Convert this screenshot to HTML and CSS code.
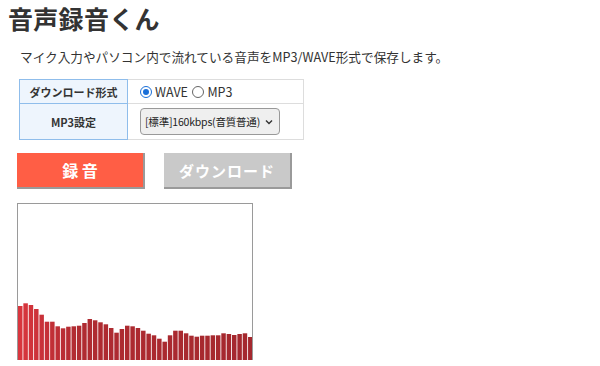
FILE: index.html
```html
<!DOCTYPE html>
<html lang="ja">
<head>
<meta charset="utf-8">
<link rel="stylesheet" href="styles.css">
</head>
<body>
<div class="page">
  <h1 class="title">音声録音くん</h1>
  <p class="desc">マイク入力やパソコン内で流れている音声をMP3/WAVE形式で保存します。</p>
  <table class="settings">
    <tr class="row1">
      <th>ダウンロード形式</th>
      <td>
        <label class="radio"><span class="dot checked"></span>WAVE</label>
        <label class="radio"><span class="dot"></span>MP3</label>
      </td>
    </tr>
    <tr class="row2">
      <th>MP3設定</th>
      <td>
        <div class="select">[標準]160kbps(音質普通)
          <svg class="chev" width="8" height="6" viewBox="0 0 8 6"><path d="M1 1.5 L4 4.5 L7 1.5" fill="none" stroke="#333" stroke-width="1.4"/></svg>
        </div>
      </td>
    </tr>
  </table>
  <div class="buttons">
    <div class="btn rec">録 音</div>
    <div class="btn dl">ダウンロード</div>
  </div>
  <div class="canvas">
    <svg width="234" height="155" viewBox="0 0 234 155">
      <defs>
        <linearGradient id="g" gradientUnits="userSpaceOnUse" x1="0" y1="0" x2="234" y2="0">
          <stop offset="0" stop-color="#da363e"/>
          <stop offset="0.25" stop-color="#b02b31"/>
          <stop offset="1" stop-color="#a4282e"/>
        </linearGradient>
      </defs>
      <g fill="url(#g)">
        <rect x="0" y="101" width="4.5" height="54"/>
        <rect x="5.35" y="98.3" width="4.5" height="56.7"/>
        <rect x="10.7" y="100" width="4.5" height="55"/>
        <rect x="16.05" y="104" width="4.5" height="51"/>
        <rect x="21.4" y="109.7" width="4.5" height="45.3"/>
        <rect x="26.75" y="116.7" width="4.5" height="38.3"/>
        <rect x="32.1" y="116.7" width="4.5" height="38.3"/>
        <rect x="37.45" y="121.3" width="4.5" height="33.7"/>
        <rect x="42.8" y="123.3" width="4.5" height="31.7"/>
        <rect x="48.15" y="121.7" width="4.5" height="33.3"/>
        <rect x="53.5" y="121.3" width="4.5" height="33.7"/>
        <rect x="58.85" y="120.7" width="4.5" height="34.3"/>
        <rect x="64.2" y="118" width="4.5" height="37"/>
        <rect x="69.55" y="114" width="4.5" height="41"/>
        <rect x="74.9" y="115.3" width="4.5" height="39.7"/>
        <rect x="80.25" y="117.3" width="4.5" height="37.7"/>
        <rect x="85.6" y="119.3" width="4.5" height="35.7"/>
        <rect x="90.95" y="123" width="4.5" height="32"/>
        <rect x="96.3" y="127.7" width="4.5" height="27.3"/>
        <rect x="101.65" y="124" width="4.5" height="31"/>
        <rect x="107" y="120.7" width="4.5" height="34.3"/>
        <rect x="112.35" y="121.3" width="4.5" height="33.7"/>
        <rect x="117.7" y="123" width="4.5" height="32"/>
        <rect x="123.05" y="125.7" width="4.5" height="29.3"/>
        <rect x="128.4" y="128.7" width="4.5" height="26.3"/>
        <rect x="133.75" y="130.3" width="4.5" height="24.7"/>
        <rect x="139.1" y="133.7" width="4.5" height="21.3"/>
        <rect x="144.45" y="136.7" width="4.5" height="18.3"/>
        <rect x="149.8" y="130.3" width="4.5" height="24.7"/>
        <rect x="155.15" y="125.7" width="4.5" height="29.3"/>
        <rect x="160.5" y="125.7" width="4.5" height="29.3"/>
        <rect x="165.85" y="128.3" width="4.5" height="26.7"/>
        <rect x="171.2" y="130.7" width="4.5" height="24.3"/>
        <rect x="176.55" y="131.7" width="4.5" height="23.3"/>
        <rect x="181.9" y="130.7" width="4.5" height="24.3"/>
        <rect x="187.25" y="130.7" width="4.5" height="24.3"/>
        <rect x="192.6" y="130.3" width="4.5" height="24.7"/>
        <rect x="197.95" y="130.3" width="4.5" height="24.7"/>
        <rect x="203.3" y="128.3" width="4.5" height="26.7"/>
        <rect x="208.65" y="129" width="4.5" height="26"/>
        <rect x="214" y="130" width="4.5" height="25"/>
        <rect x="219.35" y="129" width="4.5" height="26"/>
        <rect x="224.7" y="128.3" width="4.5" height="26.7"/>
        <rect x="230.05" y="132" width="4" height="23"/>
      </g>
    </svg>
  </div>
</div>
</body>
</html>
```
FILE: styles.css
```css
html, body {
  margin: 0;
  padding: 0;
  background: #fff;
}
.page {
  padding: 0 0 0 8px;
  font-family: "Noto Sans CJK JP", "Noto Sans", sans-serif;
  color: #333;
}
.title {
  margin: 0;
  font-size: 25px;
  line-height: 37px;
  font-weight: bold;
  color: #333;
  letter-spacing: 0.3px;
}
.desc {
  margin: 11px 0 0 12px;
  font-size: 12.65px;
  line-height: 18px;
  color: #333;
}
.settings {
  margin: 13px 0 0 11px;
  border-collapse: collapse;
  width: 285px;
  font-size: 11px;
}
.settings th {
  width: 107px;
  background: #eef5fd;
  border: 1px solid #8fbdeb;
  font-weight: bold;
  color: #333;
  text-align: center;
  padding: 0;
}
.settings td {
  border: 1px solid #ddd;
  padding: 0 0 0 12px;
}
.row1 th, .row1 td { height: 23px; }
.row2 th, .row2 td { height: 35px; }
.radio {
  display: inline-flex;
  align-items: center;
  font-size: 12.5px;
  margin-right: 2px;
  color: #333;
}
.dot {
  width: 10px;
  height: 10px;
  border: 1px solid #666;
  border-radius: 50%;
  margin-right: 3px;
  box-sizing: content-box;
  position: relative;
}
.dot.checked {
  border-color: #1a6fd8;
}
.dot.checked::after {
  content: "";
  position: absolute;
  left: 2px;
  top: 2px;
  width: 6px;
  height: 6px;
  border-radius: 50%;
  background: #1a6fd8;
}
.select {
  display: inline-flex;
  align-items: center;
  justify-content: space-between;
  box-sizing: border-box;
  width: 140px;
  height: 27px;
  padding: 0 6px 0 4px;
  border: 1px solid #999;
  border-radius: 4px;
  background: #efefef;
  font-size: 10.5px;
  color: #222;
  letter-spacing: -0.2px;
}
.chev { margin-left: 4px; }
.buttons {
  display: flex;
  gap: 19px;
  margin: 13px 0 0 9px;
}
.btn {
  box-sizing: border-box;
  width: 128px;
  height: 36px;
  display: flex;
  align-items: center;
  justify-content: center;
  color: #fff;
  font-weight: bold;
  border-right: 2px solid #9a9a9a;
  border-bottom: 2px solid #9a9a9a;
}
.rec {
  background: #ff5e45;
  font-size: 16px;
  letter-spacing: 0;
}
.dl {
  background: #c9c9c9;
  font-size: 15px;
  letter-spacing: 1px;
}
.canvas {
  margin: 14px 0 0 9px;
  width: 234px;
  height: 156px;
  border: 1px solid #9a9a9a;
  border-bottom: none;
  line-height: 0;
  display: flex;
  align-items: flex-end;
}
.canvas svg { display: block; }
```
